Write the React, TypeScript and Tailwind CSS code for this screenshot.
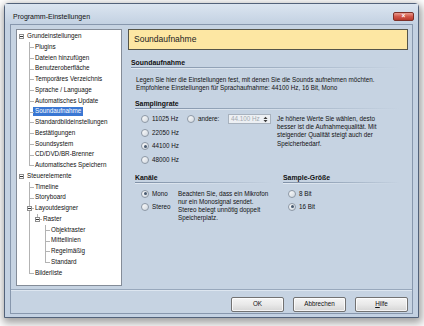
import React from "react";

type TreeRow = {
  label: string;
  level: number;
  exp?: boolean;
  last?: boolean;
  sel?: boolean;
  guides?: boolean[];
};

const treeRows: TreeRow[] = [
  { label: "Grundeinstellungen", level: 0, exp: true },
  { label: "Plugins", level: 1 },
  { label: "Dateien hinzufügen", level: 1 },
  { label: "Benutzeroberfläche", level: 1 },
  { label: "Temporäres Verzeichnis", level: 1 },
  { label: "Sprache / Language", level: 1 },
  { label: "Automatisches Update", level: 1 },
  { label: "Soundaufnahme", level: 1, sel: true },
  { label: "Standardbildeinstellungen", level: 1 },
  { label: "Bestätigungen", level: 1 },
  { label: "Soundsystem", level: 1 },
  { label: "CD/DVD/BR-Brenner", level: 1 },
  { label: "Automatisches Speichern", level: 1, last: true },
  { label: "Steuerelemente", level: 0, exp: true },
  { label: "Timeline", level: 1 },
  { label: "Storyboard", level: 1 },
  { label: "Layoutdesigner", level: 1, exp: true },
  { label: "Raster", level: 2, exp: true, last: true, guides: [false, true] },
  { label: "Objektraster", level: 3, guides: [false, true, false] },
  { label: "Mittellinien", level: 3, guides: [false, true, false] },
  { label: "Regelmäßig", level: 3, guides: [false, true, false] },
  { label: "Standard", level: 3, last: true, guides: [false, true, false] },
  { label: "Bilderliste", level: 1, last: true },
];

function Expander() {
  return (
    <span className="absolute left-[2px] top-[calc(50%-2.5px)] flex h-[5px] w-[5px] items-center justify-center border border-[#8e8e8e] bg-white">
      <span className="h-px w-[3px] bg-[#333]" />
    </span>
  );
}

function Row({ row }: { row: TreeRow }) {
  const cols = [];
  for (let k = 0; k <= row.level; k++) {
    const own = k === row.level;
    cols.push(
      <span key={k} className="relative h-full w-[8px] shrink-0">
        {!own && row.guides?.[k] && (
          <span className="absolute left-[4px] top-0 h-full w-px bg-[#b3b3b3]" />
        )}
        {own && row.level > 0 && (
          <>
            <span
              className={`absolute left-[4px] top-0 w-px bg-[#b3b3b3] ${row.last ? "h-1/2" : "h-full"}`}
            />
            <span className="absolute left-[4px] top-1/2 h-px w-[5px] bg-[#b3b3b3]" />
          </>
        )}
        {own && row.exp && <Expander />}
      </span>
    );
  }
  return (
    <div className="flex h-[10.75px] items-center">
      {cols}
      <span
        className={`flex h-[9px] items-center whitespace-nowrap px-[2px] leading-none ${
          row.sel ? "bg-[#3a77d3] text-white" : "text-[#111]"
        }`}
      >
        {row.label}
      </span>
    </div>
  );
}

function Radio({ checked }: { checked?: boolean }) {
  return (
    <span className="flex h-[8px] w-[8px] shrink-0 items-center justify-center rounded-full border border-[#8d98a5] bg-linear-to-br from-[#fdfdfd] to-[#d0d7df]">
      {checked && <span className="h-[3px] w-[3px] rounded-full bg-[#485a70]" />}
    </span>
  );
}

function RadioRow({ label, checked, h = "h-[13.5px]" }: { label: string; checked?: boolean; h?: string }) {
  return (
    <div className={`flex ${h} items-center gap-[3px]`}>
      <Radio checked={checked} />
      <span className="whitespace-nowrap leading-none">{label}</span>
    </div>
  );
}

function GroupTitle({ children, width = "w-full" }: { children: React.ReactNode; width?: string }) {
  return (
    <div className={width}>
      <div className="h-[9px] text-[6.9px] font-bold leading-[9px] text-[#111]">{children}</div>
      <div className="h-px bg-linear-to-r from-[#7f90a6] via-[#9eaec1] to-transparent" />
      <div className="h-px bg-linear-to-r from-[#e3eaf2] to-transparent" />
    </div>
  );
}

function Button({ children }: { children: React.ReactNode }) {
  return (
    <button className="flex h-[15px] w-[53px] items-center justify-center rounded-[2px] border border-[#727272] bg-linear-to-b from-[#f5f5f5] via-[#e9e9e9] to-[#d5d5d5] text-[6.3px] leading-none text-[#111] shadow-[inset_0_0_0_1px_rgba(255,255,255,0.75)]">
      {children}
    </button>
  );
}

export default function App() {
  return (
    <div className="h-[326px] w-[424px] overflow-hidden bg-white pl-[4px] pt-[3px] font-['Liberation_Sans',Arial,sans-serif] text-[6.3px] text-[#111]">
      <div className="flex h-[315px] w-[415px] flex-col rounded-t-[4px] border border-[#52627a] bg-[#c3d1e2] shadow-[1px_3px_8px_2px_rgba(0,0,0,0.38)]">
        {/* Titelleiste */}
        <div className="flex h-[20px] shrink-0 items-start justify-between bg-linear-to-b from-[#dbe5f0] to-[#c3d1e2] pl-[8px] pr-[4px]">
          <span className="mt-[9px] text-[7px] leading-[7px] text-[#111]">Programm-Einstellungen</span>
          <span className="mt-[8px] flex h-[9px] w-[21px] items-center justify-center rounded-[2px] border border-[#7d3028] bg-linear-to-b from-[#e99a8f] via-[#d2574a] to-[#b83a2c] text-[6.5px] font-bold leading-none text-white">
            ×
          </span>
        </div>

        {/* Client */}
        <div className="mx-[5px] flex h-[290px] shrink-0 flex-col border border-[#8797ad] bg-[#c6d3e2]">
          <div className="flex h-[264px] shrink-0 pl-[5px] pt-[4px]">
            {/* Baum */}
            <div className="h-[257px] w-[106px] shrink-0 border border-[#848c98] bg-white pt-px">
              {treeRows.map((r) => (
                <Row key={r.label} row={r} />
              ))}
            </div>

            {/* Inhalt */}
            <div className="ml-[6px] w-[280px] shrink-0">
              <div className="flex h-[21px] items-center border border-[#55554a] bg-[#fde7a3] pl-[5px] text-[8.5px] leading-none text-[#222]">
                Soundaufnahme
              </div>

              <div className="mt-[8px] pl-[3px] pr-[8px]">
                <GroupTitle>Soundaufnahme</GroupTitle>
              </div>

              <div className="mt-[7px] pl-[8px] leading-[8px]">
                <div className="whitespace-nowrap">
                  Legen Sie hier die Einstellungen fest, mit denen Sie die Sounds aufnehmen möchten.
                </div>
                <div className="whitespace-nowrap">
                  Empfohlene Einstellungen für Sprachaufnahme: 44100 Hz, 16 Bit, Mono
                </div>
              </div>

              <div className="pl-[7px]">
                <div className="mt-[7px] pr-[8px]">
                  <GroupTitle>Samplingrate</GroupTitle>
                </div>

                <div className="mt-[2.5px] flex">
                  <div className="w-[52px] shrink-0 pl-[6px]">
                    <RadioRow label="11025 Hz" />
                    <RadioRow label="22050 Hz" />
                    <RadioRow label="44100 Hz" checked />
                    <RadioRow label="48000 Hz" />
                  </div>
                  <div className="flex h-[13.5px] items-center">
                    <Radio />
                    <span className="ml-[3px] w-[30px] leading-none">andere:</span>
                    <div className="flex h-[10px] w-[43px] items-center justify-between border border-[#a8b2be] bg-[#edf0f4] pl-[2px] pr-[2px]">
                      <span className="leading-none text-[#a2a8b0]">44.100 Hz</span>
                      <svg width="5" height="7" viewBox="0 0 5 7">
                        <path d="M0.5 3 L2.5 0.8 L4.5 3 Z" fill="#3a3a3a" />
                        <path d="M0.5 4 L2.5 6.2 L4.5 4 Z" fill="#3a3a3a" />
                      </svg>
                    </div>
                  </div>
                  <div className="ml-[6px] mt-[2.5px] whitespace-nowrap leading-[8.2px]">
                    Je höhere Werte Sie wählen, desto
                    <br />
                    besser ist die Aufnahmequalität. Mit
                    <br />
                    steigender Qualität steigt auch der
                    <br />
                    Speicherbedarf.
                  </div>
                </div>

                <div className="mt-[6.5px] flex">
                  <div className="w-[137px] shrink-0">
                    <GroupTitle>Kanäle</GroupTitle>
                    <div className="mt-[3px] flex">
                      <div className="w-[43px] shrink-0 pl-[6px]">
                        <RadioRow label="Mono" checked h="h-[13.3px]" />
                        <RadioRow label="Stereo" h="h-[13.3px]" />
                      </div>
                      <div className="mt-[3.4px] whitespace-nowrap leading-[7.8px]">
                        Beachten Sie, dass ein Mikrofon
                        <br />
                        nur ein Monosignal sendet.
                        <br />
                        Stereo belegt unnötig doppelt
                        <br />
                        Speicherplatz.
                      </div>
                    </div>
                  </div>
                  <div className="ml-[11px] w-[117px] shrink-0">
                    <GroupTitle>Sample-Größe</GroupTitle>
                    <div className="mt-[3px] pl-[5px]">
                      <RadioRow label="8 Bit" h="h-[13.3px]" />
                      <RadioRow label="16 Bit" checked h="h-[13.3px]" />
                    </div>
                  </div>
                </div>
              </div>
            </div>
          </div>

          {/* Schaltflächen */}
          <div className="flex flex-1 items-start justify-end gap-[9px] border-t border-[#98a8bc] pr-[4px] pt-[7px] shadow-[inset_0_1px_0_#dde6f0]">
            <Button>OK</Button>
            <Button>Abbrechen</Button>
            <Button>
              <span className="underline">H</span>ilfe
            </Button>
          </div>
        </div>
      </div>
    </div>
  );
}
